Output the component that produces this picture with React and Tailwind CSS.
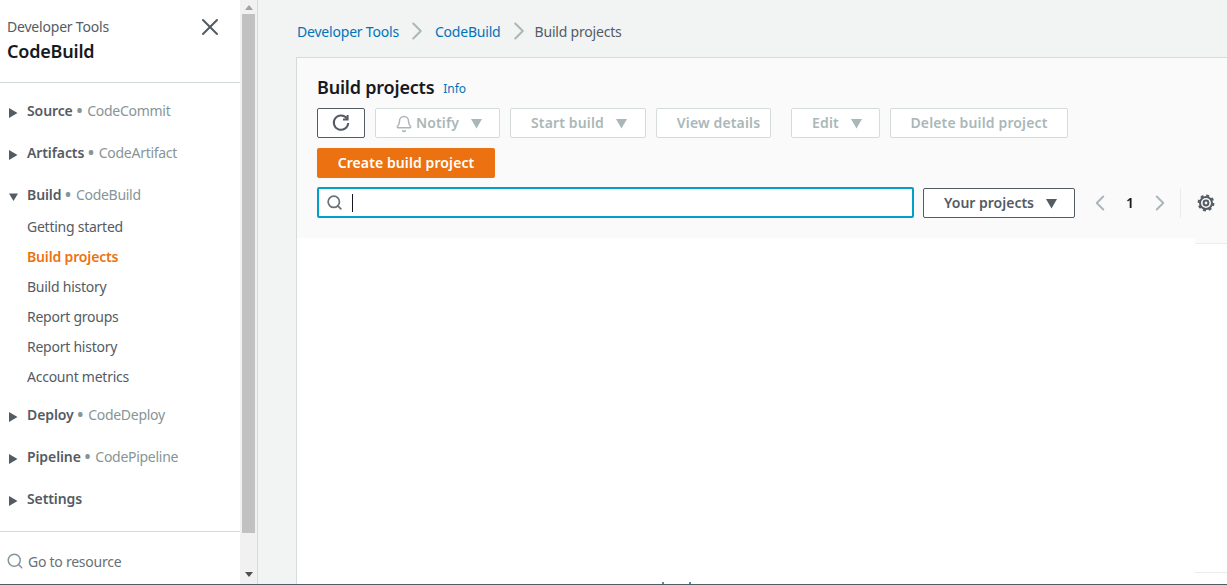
import React from "react";
import { X, Search, Bell, ChevronLeft, ChevronRight } from "lucide-react";

const font = { fontFamily: '"Noto Sans", sans-serif' };

function Caret({ down, className = "" }) {
  return (
    <svg width="10" height="10" viewBox="0 0 10 10" className={className}>
      <path d={down ? "M0 1H10L5 9.5Z" : "M0 0L8.5 5L0 10Z"} fill="currentColor" />
    </svg>
  );
}

function Section({ label, service, open, tall }) {
  return (
    <div className={`flex items-center pl-[9px] ${tall ? "h-[37px] pt-[5px]" : "h-[42px]"} text-[14px] leading-5`}>
      <Caret down={open} className={`text-[#545b64] mr-[8px] mt-[3px] shrink-0 ${open ? "w-[9px]" : ""}`} />
      <span className={`font-semibold tracking-[-0.1px] text-[#545b64] ${open ? "ml-[1px]" : ""}`}>{label}</span>
      {service && (
        <>
          <span className="text-[20px] leading-none text-[#879596] ml-[3px] mr-[4px]">•</span>
          <span className="text-[#879596] tracking-[-0.28px]">{service}</span>
        </>
      )}
    </div>
  );
}

function SubItem({ children, active }) {
  return (
    <div className={`h-[30px] flex items-center pl-[27px] text-[14px] ${active ? "font-semibold tracking-[-0.15px] text-[#ec7211]" : "tracking-[-0.25px] text-[#545b64]"}`}>
      {children}
    </div>
  );
}

function DisabledButton({ children, caret, icon, className = "" }) {
  return (
    <div className={`h-[30px] pb-[1px] flex items-center justify-center border border-[#d5dbdb] rounded-[2px] bg-white text-[14px] font-semibold tracking-[0.15px] text-[#aab7b8] ${className}`}>
      {icon}
      <span>{children}</span>
      {caret && <Caret down className="ml-[11px] mt-[1px] w-[13px] h-[11px] text-[#aab7b8]" />}
    </div>
  );
}

export default function App() {
  return (
    <div style={font} className="h-[585px] w-[1227px] overflow-hidden flex flex-col bg-[#f2f3f3]">
      <div className="flex flex-1 min-h-0">
        <aside className="w-[240px] bg-white flex flex-col shrink-0">
          <div className="h-[83px] border-b border-[#d5dbdb] shrink-0 pl-[7px] pr-[16px] pt-[17px] flex justify-between items-start">
            <div>
              <div className="text-[14px] leading-5 tracking-[-0.2px] text-[#545b64]">Developer Tools</div>
              <div className="text-[18px] leading-6 mt-[2px] font-semibold tracking-[-0.2px] text-[#16191f]">CodeBuild</div>
            </div>
            <X size={28} strokeWidth={1.7} className="text-[#545b64] -mt-[4px]" />
          </div>
          <nav className="flex-1 pt-[7px]">
            <Section label="Source" service="CodeCommit" />
            <Section label="Artifacts" service="CodeArtifact" />
            <Section label="Build" service="CodeBuild" open tall />
            <SubItem>Getting started</SubItem>
            <SubItem active>Build projects</SubItem>
            <SubItem>Build history</SubItem>
            <SubItem>Report groups</SubItem>
            <SubItem>Report history</SubItem>
            <SubItem>Account metrics</SubItem>
            <div className="h-[3px]" />
            <Section label="Deploy" service="CodeDeploy" />
            <Section label="Pipeline" service="CodePipeline" />
            <Section label="Settings" />
          </nav>
          <div className="h-[53px] border-t border-[#d5dbdb] flex items-center pl-[6px] pt-[6px] text-[14px] tracking-[-0.25px] text-[#687078] shrink-0">
            <Search size={18} strokeWidth={2} className="text-[#879596] mr-[4px]" />
            <span>Go to resource</span>
          </div>
        </aside>

        <div className="w-[17px] bg-[#f1f1f1] flex flex-col items-center shrink-0">
          <div className="h-[14px] flex items-center justify-center shrink-0">
            <svg width="8" height="5" viewBox="0 0 8 5"><path d="M0 5L4 0L8 5Z" fill="#a3a3a3" /></svg>
          </div>
          <div className="w-[13px] h-[519px] bg-[#c1c1c1] shrink-0" />
          <div className="flex-1 flex items-end justify-center pb-[7px]">
            <svg width="8" height="5" viewBox="0 0 8 5"><path d="M0 0L4 5L8 0Z" fill="#505050" /></svg>
          </div>
        </div>

        <main className="flex-1 min-w-0 pl-[38px] flex flex-col border-l border-[#d5dbdb]">
          <div className="h-[57px] shrink-0 flex items-center pl-[1px] pt-[5px] text-[14px] tracking-[-0.2px]">
            <span className="text-[#0073bb]">Developer Tools</span>
            <ChevronRight size={30} strokeWidth={1.6} className="text-[#aab7b8] mx-[3px]" />
            <span className="text-[#0073bb]">CodeBuild</span>
            <ChevronRight size={30} strokeWidth={1.6} className="text-[#aab7b8] ml-[3px] mr-[1px]" />
            <span className="text-[#545b64]">Build projects</span>
          </div>

          <div className="flex-1 min-h-0 flex flex-col border-l border-t border-[#d5dbdb] bg-white">
            <div className="h-[180px] bg-[#fafafa] pl-[20px] pt-[17px] shrink-0">
              <div className="flex items-baseline h-[24px] whitespace-nowrap">
                <h1 className="text-[18px] leading-6 font-semibold tracking-[-0.2px] text-[#16191f]">Build projects</h1>
                <span className="ml-[9px] text-[12px] tracking-[-0.1px] text-[#0073bb] -translate-y-[1px]">Info</span>
              </div>
              <div className="flex gap-[10px] mt-[9px]">
                <div className="h-[30px] w-[48px] flex items-center justify-center border border-[#545b64] rounded-[2px] bg-white">
                  <svg width="18" height="18" viewBox="0 0 18 18" fill="none" stroke="#545b64" strokeWidth="2">
                    <path d="M15 4.6A7.2 7.2 0 1 0 16.2 9" />
                    <path d="M15.6 1V5.6H11" />
                  </svg>
                </div>
                <DisabledButton caret className="w-[125px] pl-[3px]" icon={<Bell size={18} strokeWidth={2} className="mr-[3px] mt-[2px]" />}>Notify</DisabledButton>
                <DisabledButton caret className="w-[136px] pl-[3px]">Start build</DisabledButton>
                <DisabledButton className="w-[115px] pl-[10px]">View details</DisabledButton>
                <DisabledButton caret className="w-[89px] ml-[10px] pl-[4px]">Edit</DisabledButton>
                <DisabledButton className="w-[178px]">Delete build project</DisabledButton>
              </div>
              <div className="mt-[10px] h-[30px] pb-[1px] w-[178px] flex items-center justify-center rounded-[2px] bg-[#ec7211] text-white text-[14px] font-semibold tracking-[0.1px]">
                Create build project
              </div>
              <div className="mt-[9px] flex items-center">
                <div className="h-[31px] w-[597px] border-2 border-[#00a1c9] rounded-[2px] bg-white flex items-center pl-[7px]">
                  <Search size={17} strokeWidth={2.4} className="text-[#687078]" />
                  <div className="w-[1px] h-[18px] bg-[#16191f] ml-[9px]" />
                </div>
                <div className="ml-[9px] mt-[1px] h-[30px] pb-[1px] pl-[4px] w-[152px] flex items-center justify-center border border-[#545b64] rounded-[2px] bg-white text-[14px] font-semibold text-[#545b64]">
                  <span>Your projects</span>
                  <Caret down className="ml-[11px] mt-[1px] w-[13px] h-[11px] text-[#545b64]" />
                </div>
                <ChevronLeft size={26} strokeWidth={1.8} className="text-[#aab7b8] ml-[12px]" />
                <span className="text-[14px] font-semibold text-[#16191f] mx-[13px] w-[8px] text-center">1</span>
                <ChevronRight size={26} strokeWidth={1.8} className="text-[#aab7b8]" />
                <div className="ml-[7px] w-[1px] h-[30px] bg-[#eaeded]" />
                <svg width="18" height="18" viewBox="0 0 18 18" fill="none" stroke="#545b64" className="ml-[16px]">
                  <circle cx="9" cy="9" r="6" strokeWidth="2" />
                  <circle cx="9" cy="9" r="7.4" strokeWidth="2" strokeDasharray="3 2.81" />
                  <circle cx="9" cy="9" r="2.4" strokeWidth="2" />
                </svg>
              </div>
            </div>
            <div className="flex-1 min-h-0 flex">
              <div className="w-[898px] shrink-0 bg-white relative">
                <div className="absolute left-[365px] bottom-0 w-[2px] h-[2px] bg-[#5b86a8]" />
                <div className="absolute left-[392px] bottom-0 w-[2px] h-[2px] bg-[#5b86a8]" />
              </div>
              <div className="flex-1 flex flex-col">
                <div className="h-[6px] bg-[#fafafa] border-b border-[#eaeded] shrink-0" />
                <div className="h-[329px] border-b border-[#eaeded] bg-white shrink-0" />
              </div>
            </div>
          </div>
        </main>
      </div>
      <div className="h-[1px] bg-[#545b64] shrink-0" />
    </div>
  );
}
